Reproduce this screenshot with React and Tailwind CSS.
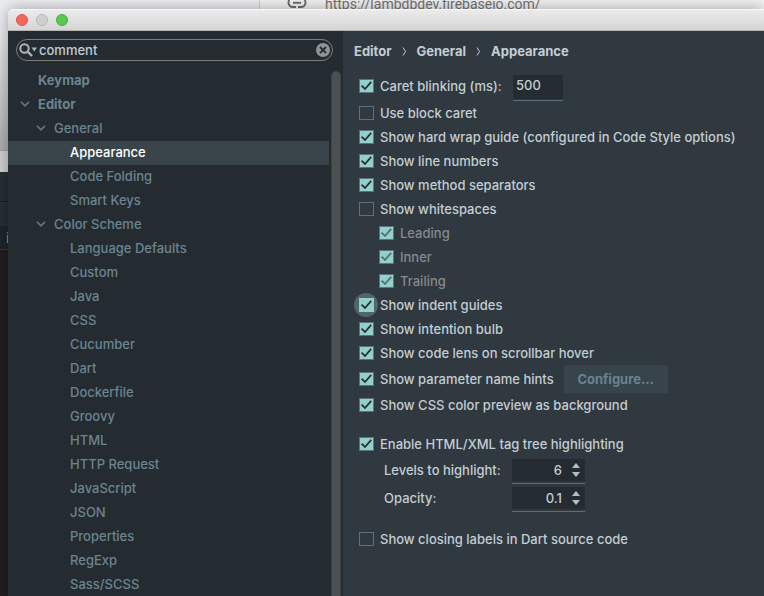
import React, { useState } from 'react';

const treeItems = [
  { name: 'Keymap', level: 0 },
  { name: 'Editor', level: 0, open: true },
  { name: 'General', level: 1, open: true },
  { name: 'Appearance', level: 2 },
  { name: 'Code Folding', level: 2 },
  { name: 'Smart Keys', level: 2 },
  { name: 'Color Scheme', level: 1, open: true },
  { name: 'Language Defaults', level: 2 },
  { name: 'Custom', level: 2 },
  { name: 'Java', level: 2 },
  { name: 'CSS', level: 2 },
  { name: 'Cucumber', level: 2 },
  { name: 'Dart', level: 2 },
  { name: 'Dockerfile', level: 2 },
  { name: 'Groovy', level: 2 },
  { name: 'HTML', level: 2 },
  { name: 'HTTP Request', level: 2 },
  { name: 'JavaScript', level: 2 },
  { name: 'JSON', level: 2 },
  { name: 'Properties', level: 2 },
  { name: 'RegExp', level: 2 },
  { name: 'Sass/SCSS', level: 2 },
];

const levelStyles = [
  'pl-3 font-bold',
  'pl-7 font-medium',
  'pl-11 font-medium',
];

const Chevron = () => (
  <svg width="10" height="6" viewBox="0 0 10 6" fill="none" stroke="#66727a" strokeWidth="1.7">
    <path d="M1 0.8l4 4 4-4" />
  </svg>
);

const CheckOption = ({ label, checked = false, disabled = false, focused = false }) => {
  const [on, setOn] = useState(checked);

  return (
    <label className={`flex h-6 items-center gap-[6px] ${disabled ? 'text-[#858a8c]' : 'text-[#c3cdd3]'}`}>
      <span className="relative flex">
        {focused && <span className="absolute -left-[5px] -top-[5px] size-6 rounded-full bg-[#4f676b]" />}
        <input
          type="checkbox"
          checked={on}
          disabled={disabled}
          onChange={() => setOn(!on)}
          className={`relative h-[14px] w-[15px] appearance-none border ${
            on ? 'bg-[#94cfc9]' : ''
          } ${focused ? 'border-[#94cfc9]' : 'border-[#587480]'}`}
        />
        {on && (
          <svg
            className="pointer-events-none absolute left-0 top-0"
            width="15"
            height="14"
            viewBox="0 0 15 14"
            fill="none"
            stroke={disabled ? '#50707a' : '#263238'}
            strokeWidth="1.8"
          >
            <path d="M2.6 6.6l3.4 3.4 6.2-7.2" />
          </svg>
        )}
      </span>
      <span>{label}</span>
    </label>
  );
};

const Spinner = ({ id, label, value }) => (
  <div className="flex h-7 items-end pl-[25px]">
    <label htmlFor={id} className="w-32 self-center">{label}</label>
    <div className="h-[25px] w-[73px] border-b border-[#56717f]">
      <div className="flex h-[22px] items-center bg-[#242c31] pr-[3px]">
        <input id={id} defaultValue={value} className="w-full min-w-0 flex-1 text-right outline-none" />
        <div className="ml-2 flex flex-col">
          <button type="button" aria-label={`Increase ${label}`} className="flex h-[9px] w-3 items-center justify-center">
            <svg width="8" height="5" viewBox="0 0 8 5" fill="#b4bfc5"><path d="M0 5h8L4 0z" /></svg>
          </button>
          <button type="button" aria-label={`Decrease ${label}`} className="flex h-[9px] w-3 items-center justify-center">
            <svg width="8" height="5" viewBox="0 0 8 5" fill="#b4bfc5"><path d="M0 0h8L4 5z" /></svg>
          </button>
        </div>
      </div>
    </div>
  </div>
);

const Backdrop = () => (
  <div className="absolute inset-0 flex flex-col bg-[#221d20]">
    <div className="flex h-[150px] shrink-0 bg-linear-to-b from-[#eceef1] from-20% to-[#aeafb0]">
      <div className="w-[260px] border-r border-[#d0d0d0]" />
      <div className="flex flex-1 items-start gap-[18px] bg-[#f3f3f3] pl-[27px] text-[#757575]">
        <svg width="20" height="9" viewBox="0 0 20 9" fill="none" stroke="#6f6f6f" strokeWidth="2">
          <path d="M9 7H6A4.5 4.5 0 0 1 6-2h3M11 7h3a4.5 4.5 0 0 0 0-9h-3M6 2.8h8" />
        </svg>
        <span className="-mt-[6px] font-[Roboto] text-sm leading-5">https://lambdbdev.firebaseio.com/</span>
      </div>
    </div>
    <div className="h-[22px] shrink-0 border-t border-[#a5a5a5] bg-[#d2d2d2]" />
    <div className="h-[30px] shrink-0 border-b border-[#1a2024] bg-[#263036]" />
    <div className="h-6 shrink-0 bg-[#263036]" />
    <div className="h-6 shrink-0 border-b border-[#343b3f] bg-[#1e262a] pl-[6px] text-[13px] leading-6 text-[#9a9c80]">i</div>
  </div>
);

const Sidebar = () => {
  const [selected, setSelected] = useState('Appearance');

  return (
    <aside className="flex w-[335px] shrink-0 flex-col bg-[#242c31]">
      <div className="ml-2 mr-[10px] mt-2 flex h-[22px] shrink-0 items-center rounded-full border border-[#7c7c7c] px-[2px]">
        <svg width="18" height="14" viewBox="0 0 18 14" fill="none" stroke="#b3b3b3" strokeWidth="2">
          <circle cx="5.5" cy="5.5" r="4.2" />
          <path d="M8.5 8.5l4.5 4.5" strokeWidth="2.4" />
          <path d="M12.5 4.5h5.5l-2.75 4z" fill="#b3b3b3" stroke="none" />
        </svg>
        <input
          aria-label="Search settings"
          defaultValue="comment"
          className="ml-[2px] min-w-0 flex-1 font-medium text-[#c3cdd3] outline-none"
        />
        <button type="button" aria-label="Clear search">
          <svg width="14" height="14" viewBox="0 0 14 14">
            <circle cx="7" cy="7" r="7" fill="#929292" />
            <path d="M4 4l6 6M10 4l-6 6" stroke="#242c31" strokeWidth="1.8" />
          </svg>
        </button>
      </div>

      <div className="mt-2 flex min-h-0 flex-1 gap-[2px] pr-[2px]">
        <nav className="flex-1 overflow-hidden">
          {treeItems.map((item) => (
            <button
              key={item.name}
              type="button"
              onClick={() => setSelected(item.name)}
              className={`flex h-6 w-full items-center pb-[2px] ${levelStyles[item.level]} ${
                selected === item.name ? 'bg-[#39454b] text-white' : 'text-[#6b8490]'
              }`}
            >
              <span className="w-[18px]">{item.open && <Chevron />}</span>
              {item.name}
            </button>
          ))}
        </nav>
        <div className="mt-[2px] w-[10px] rounded-t-full border border-b-0 border-[#3d4345] bg-[#4b5052]" />
      </div>
    </aside>
  );
};

const SettingsPanel = () => (
  <main className="min-w-0 flex-1 overflow-hidden whitespace-nowrap bg-[#2f393f] pl-4 font-medium text-[#c3cdd3]">
    <div className="-ml-[5px] flex h-10 items-center gap-[10px] font-bold">
      <span>Editor</span>
      <svg width="5" height="9" viewBox="0 0 5 9" fill="none" stroke="#c3cdd3"><path d="M1 0.5l2.5 4-2.5 4" /></svg>
      <span>General</span>
      <svg width="5" height="9" viewBox="0 0 5 9" fill="none" stroke="#c3cdd3"><path d="M1 0.5l2.5 4-2.5 4" /></svg>
      <span>Appearance</span>
    </div>

    <div className="flex h-[30px] items-center">
      <div className="w-[154px]"><CheckOption label="Caret blinking (ms):" checked /></div>
      <div className="mt-1 h-[26px] w-[50px] border-b border-[#56717f]">
        <input aria-label="Caret blinking interval" defaultValue="500" className="block h-6 w-full bg-[#242c31] px-[3px] pb-1 outline-none" />
      </div>
    </div>
    <CheckOption label="Use block caret" />
    <CheckOption label="Show hard wrap guide (configured in Code Style options)" checked />
    <CheckOption label="Show line numbers" checked />
    <CheckOption label="Show method separators" checked />
    <CheckOption label="Show whitespaces" />
    <div className="pl-5">
      <CheckOption label="Leading" checked disabled />
      <CheckOption label="Inner" checked disabled />
      <CheckOption label="Trailing" checked disabled />
    </div>
    <CheckOption label="Show indent guides" checked focused />
    <CheckOption label="Show intention bulb" checked />
    <CheckOption label="Show code lens on scrollbar hover" checked />
    <div className="flex h-7 items-center gap-[10px]">
      <CheckOption label="Show parameter name hints" checked />
      <button type="button" className="h-7 w-[104px] bg-[#37444b] font-bold text-[#688390]">Configure...</button>
    </div>
    <CheckOption label="Show CSS color preview as background" checked />

    <div className="mt-[15px]">
      <CheckOption label="Enable HTML/XML tag tree highlighting" checked />
      <Spinner id="levels" label="Levels to highlight:" value="6" />
      <Spinner id="opacity" label="Opacity:" value="0.1" />
    </div>

    <div className="mt-[15px]">
      <CheckOption label="Show closing labels in Dart source code" />
    </div>
  </main>
);

const App = () => (
  <div className="relative flex h-screen flex-col overflow-hidden pl-2 pt-[9px] font-[Inter,sans-serif] text-[13px] leading-4">
    <Backdrop />
    <div className="relative flex min-h-0 flex-1 flex-col overflow-hidden rounded-tl-[5px] shadow-[0_0_16px_rgba(0,0,0,0.35)]">
      <header className="flex h-[22px] shrink-0 items-center gap-2 border-b border-[#b5b5b5] border-t border-t-[#f8f8f8] bg-linear-to-b from-[#ebebeb] to-[#d5d5d5] pl-2">
        <button type="button" aria-label="Close" className="size-3 rounded-full border border-[#e0524a] bg-[#f2685f]" />
        <button type="button" aria-label="Minimize" className="size-3 rounded-full border border-[#b9b9b9] bg-[#cfcfcf]" />
        <button type="button" aria-label="Zoom" className="size-3 rounded-full border border-[#45ac3d] bg-[#5ac752]" />
      </header>
      <div className="flex min-h-0 flex-1">
        <Sidebar />
        <SettingsPanel />
      </div>
    </div>
  </div>
);

export default App;
